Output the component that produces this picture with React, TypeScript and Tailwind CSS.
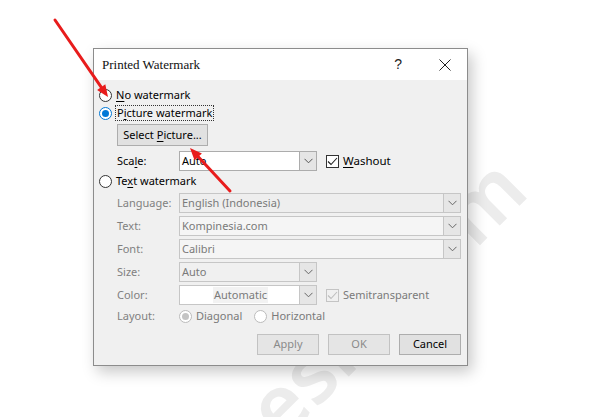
import React from 'react';

const font = "font-['Noto_Sans','Open_Sans',sans-serif] text-[11px]";

function Chevron({ color = '#555' }: { color?: string }) {
  return (
    <svg width="9" height="6" viewBox="0 0 9 6">
      <path d="M0.5 0.8 L4.5 4.8 L8.5 0.8" fill="none" stroke={color} strokeWidth="1" />
    </svg>
  );
}

function Radio({ state }: { state: 'off' | 'on' | 'disabledOn' | 'disabledOff' }) {
  const ring =
    state === 'on' ? 'border-[#0078d7] bg-white' : state === 'off' ? 'border-[#333] bg-white' : 'border-[#bcbcbc] bg-white';
  return (
    <span className={`flex h-[13px] w-[13px] shrink-0 items-center justify-center rounded-full border ${ring}`}>
      {state === 'on' && <span className="h-[7px] w-[7px] rounded-full bg-[#0078d7]" />}
      {state === 'disabledOn' && <span className="h-[7px] w-[7px] rounded-full bg-[#c4c4c4]" />}
    </span>
  );
}

function Check({ disabled }: { disabled?: boolean }) {
  return (
    <span
      className={`flex h-[13px] w-[13px] shrink-0 items-center justify-center border ${
        disabled ? 'border-[#c4c4c4] bg-[#f0f0f0]' : 'border-[#333] bg-white'
      }`}
    >
      <svg width="11" height="9" viewBox="0 0 11 9">
        <path d="M1 4.5 L4 7.5 L10 1" fill="none" stroke={disabled ? '#bdbdbd' : '#222'} strokeWidth="1.1" />
      </svg>
    </span>
  );
}

function Select({
  value,
  wide,
  disabled,
  bg,
  center,
}: {
  value: string;
  wide?: boolean;
  disabled?: boolean;
  bg: string;
  center?: boolean;
}) {
  return (
    <div
      className={`flex h-[20px] ${wide ? 'w-[282px]' : 'w-[138px]'} border ${
        disabled ? 'border-[#c6c6c6]' : 'border-[#acacac]'
      } ${bg}`}
    >
      <div
        className={`flex flex-1 items-center pl-[2px] ${disabled ? 'text-[#7a7a7a]' : 'text-black'} ${
          center ? 'justify-center' : ''
        }`}
      >
        {center ? <span className="bg-[#f2f2f2] px-[1px] text-[#7a7a7a]">{value}</span> : value}
      </div>
      <div
        className={`flex w-[17px] items-center justify-center border-l ${
          disabled ? 'border-[#c6c6c6] bg-[#e6e6e6]' : 'border-[#acacac] bg-[#e5e5e5]'
        }`}
      >
        <Chevron color={disabled ? '#666' : '#555'} />
      </div>
    </div>
  );
}

function Row({ label, children }: { label: string; children: React.ReactNode }) {
  return (
    <div className="flex items-center">
      <span className="w-[62px] text-[#808080]">{label}</span>
      {children}
    </div>
  );
}

export default function App() {
  return (
    <div className="relative h-[417px] w-[594px] overflow-hidden bg-white pl-[93px] pt-[48px]">
      {/* faint site watermark behind the dialog */}
      <div className="pointer-events-none absolute left-[44px] top-[595px] h-[82px] origin-left -rotate-45 whitespace-nowrap font-['Noto_Sans',sans-serif] text-[82px] font-semibold leading-none text-[#ececec]">
        kompinesia.com
      </div>

      <div
        className={`relative z-10 flex h-[318px] w-[375px] flex-col border border-[#8c8c8c] shadow-[4px_6px_14px_rgba(0,0,0,0.22)] ${font}`}
      >
        {/* title bar */}
        <div className="flex h-[31px] items-center bg-white pl-[8px] pr-[16px]">
          <span className="flex-1 font-['Liberation_Serif',serif] text-[13px] text-[#111]">Printed Watermark</span>
          <span className="mr-[37px] font-['Liberation_Sans',sans-serif] text-[14px] text-[#222]">?</span>
          <svg width="12" height="12" viewBox="0 0 12 12">
            <path d="M0.5 0.5 L11.5 11.5 M11.5 0.5 L0.5 11.5" stroke="#222" strokeWidth="1" />
          </svg>
        </div>

        {/* body */}
        <div className="flex flex-1 flex-col bg-[#f0f0f0] pl-[5px] pr-[6px] pt-[6px]">
          <div className="flex h-[18px] items-center gap-[4px]">
            <Radio state="off" />
            <span>
              <span className="underline underline-offset-2">N</span>o watermark
            </span>
          </div>
          <div className="flex h-[18px] items-center gap-[3px]">
            <Radio state="on" />
            <span className="border border-dotted border-[#333] px-[1px] leading-[14px]">
              P<span className="underline underline-offset-2">i</span>cture watermark
            </span>
          </div>

          <div className="ml-[18px] mt-[2px] flex h-[22px] w-[91px] items-center justify-center border border-[#adadad] bg-[#e1e1e1]">
            Select <span className="ml-[3px] underline underline-offset-2">P</span>icture...
          </div>

          <div className="ml-[18px] mt-[5px] flex items-center">
            <span className="w-[62px]">
              Sca<span className="underline underline-offset-2">l</span>e:
            </span>
            <Select value="Auto" bg="bg-white" />
            <div className="ml-[9px] flex items-center gap-[4px]">
              <Check />
              <span className="text-[11.5px]">
                <span className="underline underline-offset-2">W</span>ashout
              </span>
            </div>
          </div>

          <div className="mt-[1px] flex h-[18px] items-center gap-[4px]">
            <Radio state="off" />
            <span>
              Te<span className="underline underline-offset-2">x</span>t watermark
            </span>
          </div>

          <div className="ml-[18px] mt-[3px] flex flex-col gap-[3px]">
            <Row label="Language:">
              <Select value="English (Indonesia)" wide disabled bg="bg-[#eeeeee]" />
            </Row>
            <Row label="Text:">
              <Select value="Kompinesia.com" wide disabled bg="bg-[#f5f5f5]" />
            </Row>
            <Row label="Font:">
              <Select value="Calibri" wide disabled bg="bg-[#f5f5f5]" />
            </Row>
            <Row label="Size:">
              <Select value="Auto" disabled bg="bg-[#f0f0f0]" />
            </Row>
            <Row label="Color:">
              <Select value="Automatic" disabled bg="bg-white" center />
              <div className="ml-[9px] flex items-center gap-[4px]">
                <Check disabled />
                <span className="text-[#7a7a7a]">Semitransparent</span>
              </div>
            </Row>
          </div>

          <div className="ml-[18px] mt-[2px] flex h-[18px] items-center text-[#7a7a7a]">
            <span className="w-[62px] text-[#808080]">Layout:</span>
            <Radio state="disabledOn" />
            <span className="ml-[4px]">Diagonal</span>
            <span className="ml-[12px]">
              <Radio state="disabledOff" />
            </span>
            <span className="ml-[4px]">Horizontal</span>
          </div>

          <div className="mt-[9px] flex justify-end gap-[9px]">
            <div className="flex h-[21px] w-[62px] items-center justify-center border border-[#c2c2c2] bg-[#e5e5e5] text-[#8a8a8a]">
              Apply
            </div>
            <div className="flex h-[21px] w-[62px] items-center justify-center border border-[#c2c2c2] bg-[#e5e5e5] text-[#8a8a8a]">
              OK
            </div>
            <div className="flex h-[21px] w-[62px] items-center justify-center border border-[#adadad] bg-[#e1e1e1] text-black">
              Cancel
            </div>
          </div>
        </div>
      </div>

      {/* red annotation arrows */}
      <svg className="pointer-events-none absolute left-0 top-0 z-20" width="594" height="417" viewBox="0 0 594 417">
        <line x1="55" y1="20" x2="101.2" y2="87.1" stroke="#e81c1c" strokeWidth="3" strokeLinecap="round" />
        <polygon points="108,97 97.1,89.9 105.3,84.3" fill="#e81c1c" />
        <line x1="230" y1="191" x2="198.2" y2="156.8" stroke="#e81c1c" strokeWidth="3" strokeLinecap="round" />
        <polygon points="190,148 201.9,153.4 194.5,160.2" fill="#e81c1c" />
      </svg>
    </div>
  );
}
